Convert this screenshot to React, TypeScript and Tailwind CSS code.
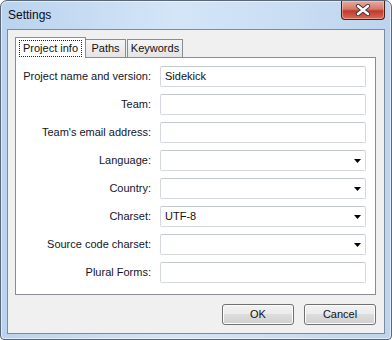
const font = { fontFamily: '"Liberation Sans", Arial, sans-serif' };

type Row = { label: string; value?: string; combo?: boolean };

const rows: Row[] = [
  { label: 'Project name and version:', value: 'Sidekick' },
  { label: 'Team:' },
  { label: "Team's email address:" },
  { label: 'Language:', combo: true },
  { label: 'Country:', combo: true },
  { label: 'Charset:', value: 'UTF-8', combo: true },
  { label: 'Source code charset:', combo: true },
  { label: 'Plural Forms:' },
];

function Field({ value, combo }: { value?: string; combo?: boolean }) {
  return (
    <div className="flex h-[21px] flex-1 items-center rounded-[2px] border border-[#d5d9df] border-t-[#c3c7ce] bg-white pl-[4px] pr-[3px] text-[11px] text-[#111]">
      <span className="flex-1">{value}</span>
      {combo && (
        <svg width="7" height="4" viewBox="0 0 7 4" className="mr-px">
          <path d="M0 0H7L3.5 4Z" fill="#000" />
        </svg>
      )}
    </div>
  );
}

function Button({ children }: { children: string }) {
  return (
    <div className="flex h-[21px] w-[72px] items-center justify-center rounded-[3px] border border-[#707070] bg-[linear-gradient(#f2f2f2_0%,#ebebeb_50%,#dddddd_50%,#cfcfcf_100%)] text-[11px] text-[#111] shadow-[inset_0_0_0_1px_#fcfcfc]">
      {children}
    </div>
  );
}

export default function App() {
  return (
    <div
      style={font}
      className="flex h-[340px] w-[392px] flex-col rounded-t-[7px] rounded-b-[4px] border border-[#596777] bg-[linear-gradient(90deg,#bad3ee_0%,#d4e5f7_45%,#c9ddf3_75%,#bcd4ee_100%)] shadow-[inset_0_0_0_1px_rgba(255,255,255,0.55)]"
    >
      <div className="flex h-[28px] items-start justify-between">
        <span className="mt-[7px] ml-[7px] text-[12px] leading-[15px] text-[#0b0b1a]">Settings</span>
        <div className="mr-[6px] flex h-[19px] w-[44px] items-center justify-center rounded-b-[4px] border border-t-0 border-[#4b1d17] bg-[linear-gradient(#e9a99f_0%,#d47a6c_45%,#c0392b_55%,#d86b5a_100%)] shadow-[inset_0_0_0_1px_rgba(255,220,210,0.45)]">
          <svg width="16" height="12" viewBox="0 0 16 12">
            <path d="M3 2L13 10M13 2L3 10" stroke="#3b3b3b" strokeWidth="4.2" strokeLinecap="round" />
            <path d="M3 2L13 10M13 2L3 10" stroke="#fff" strokeWidth="2.4" strokeLinecap="round" />
          </svg>
        </div>
      </div>

      <div className="mx-[6px] flex h-[305px] flex-col border border-[#7b8ca0] bg-[#f0f0f0] px-[7px] pt-[7px]">
        <div className="relative z-10 flex h-[20px] items-start whitespace-nowrap text-[11px] text-[#111]">
          <div className="flex h-[21px] w-[71px] items-center justify-center border border-b-0 border-[#898c95] bg-white">
            <span className="border border-dotted border-[#222] px-[3px] leading-[15px]">Project info</span>
          </div>
          <div className="mt-[2px] flex h-[18px] w-[40px] items-center justify-center border border-b-0 border-l-0 border-[#898c95] bg-[linear-gradient(#f5f5f5,#e4e4e4)]">
            Paths
          </div>
          <div className="mt-[2px] ml-px flex h-[18px] w-[56px] items-center justify-center border border-b-0 border-[#898c95] bg-[linear-gradient(#f5f5f5,#e4e4e4)]">
            Keywords
          </div>
        </div>

        <div className="flex h-[238px] w-[361px] flex-col gap-[7px] border border-[#898c95] bg-white pt-[8px] pr-[9px]">
          {rows.map((r) => (
            <div key={r.label} className="flex h-[21px] items-center">
              <div className="w-[135px] shrink-0 whitespace-nowrap text-right text-[11px] text-[#141428]">{r.label}</div>
              <div className="ml-[9px] flex flex-1">
                <Field value={r.value} combo={r.combo} />
              </div>
            </div>
          ))}
        </div>

        <div className="mt-[9px] flex w-[361px] justify-end gap-[10px]">
          <Button>OK</Button>
          <Button>Cancel</Button>
        </div>
      </div>
    </div>
  );
}
